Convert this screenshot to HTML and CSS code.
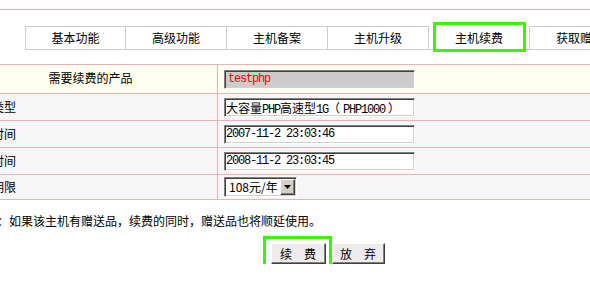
FILE: index.html
```html
<!DOCTYPE html>
<html lang="zh-CN">
<head>
<meta charset="utf-8">
<title>主机续费</title>
<link rel="stylesheet" href="styles.css">
</head>
<body>
<div class="page">
  <div class="rule"></div>
  <ul class="tabs">
    <li class="tab">基本功能</li>
    <li class="tab">高级功能</li>
    <li class="tab">主机备案</li>
    <li class="tab">主机升级</li>
    <li class="tab tab-active">主机续费</li>
    <li class="tab">获取赠品</li>
  </ul>
  <div class="form">
    <div class="row row-first">
      <div class="label label-center">需要续费的产品</div>
      <div class="value"><input class="field field-ro mono" value="testphp" readonly></div>
    </div>
    <div class="row">
      <div class="label">主机类型</div>
      <div class="value"><div class="field">大容量<span class="mono">PHP</span>高速型<span class="mono">1G</span>（<span class="mono paren-inner">PHP1000</span>）</div></div>
    </div>
    <div class="row">
      <div class="label">开通时间</div>
      <div class="value"><input class="field mono" value="2007-11-2 23:03:46" readonly></div>
    </div>
    <div class="row">
      <div class="label">到期时间</div>
      <div class="value"><input class="field mono" value="2008-11-2 23:03:45" readonly></div>
    </div>
    <div class="row row-last">
      <div class="label">续费期限</div>
      <div class="value">
        <div class="select"><span class="select-text">108元/年</span><span class="select-btn"><svg width="7" height="4" viewBox="0 0 7 4"><path d="M0 0H7L3.5 4Z" fill="#000"/></svg></span></div>
      </div>
    </div>
  </div>
  <p class="note">注意：如果该主机有赠送品，续费的同时，赠送品也将顺延使用。</p>
  <div class="actions">
    <button class="btn btn-primary">续　费</button>
    <button class="btn btn-cancel">放　弃</button>
  </div>
</div>
</body>
</html>
```
FILE: styles.css
```css
html, body {
  margin: 0;
  padding: 0;
  background: #fff;
  overflow: hidden;
}
body {
  font: 12px/16px "Noto Sans CJK SC", sans-serif;
  color: #000;
}
.page {
  margin-left: -36px;
  width: 727px;
  padding-top: 9px;
}
.rule {
  border-top: 1px solid #e8b2b6;
}
.tabs {
  display: flex;
  list-style: none;
  margin: 16px 0 0 61px;
  padding: 0;
}
.tab {
  flex: none;
  position: relative;
  width: 100px;
  height: 22px;
  line-height: 22px;
  text-align: center;
  border: 1px solid #cccccc;
  border-left: none;
}
.tab:first-child {
  width: 99px;
  border-left: 1px solid #cccccc;
}
.tab-active {
  border-top-color: transparent;
}
.tab-active::after {
  content: "";
  position: absolute;
  left: 4px;
  right: 3px;
  top: -5px;
  bottom: -3px;
  border: 3px solid #38f500;
  pointer-events: none;
}
.form {
  margin-top: 14px;
  border-top: 1px solid #e8b2b6;
}
.row {
  display: flex;
  height: 26px;
  background: #f6f6f6;
  border-bottom: 1px solid #e8b2b6;
}
.row-first {
  height: 28px;
  background: #fffff0;
}
.row-last {
  height: 24px;
}
.label {
  box-sizing: border-box;
  width: 254px;
  flex: none;
  display: flex;
  align-items: center;
  padding-left: 4px;
  border-right: 1px solid #e8b2b6;
}
.label-center {
  justify-content: center;
  padding-left: 0;
  padding-bottom: 3px;
}
.value {
  flex: 1;
  display: flex;
  align-items: center;
  padding-left: 6px;
}
.field {
  box-sizing: border-box;
  width: 191px;
  height: 19px;
  margin: 0;
  padding: 0 1px;
  border: 1px solid;
  border-color: #808080 #ffffff #ffffff #808080;
  box-shadow: inset 1px 1px #404040, inset -1px -1px #d4d0c8;
  background: #fff;
  color: #000;
  font: 12px/17px "Noto Sans CJK SC", sans-serif;
  outline: none;
  white-space: nowrap;
}
.mono {
  font-family: "Liberation Mono", "Noto Sans CJK SC", monospace;
  letter-spacing: -1.2px;
}
.paren-inner {
  padding: 0 3px;
}
.field-ro {
  background: #cccccc;
  color: #ff0000;
  padding-left: 3px;
}
.select {
  box-sizing: border-box;
  width: 73px;
  height: 20px;
  display: flex;
  align-items: center;
  justify-content: space-between;
  padding-left: 4px;
  border: 1px solid;
  border-color: #808080 #ffffff #ffffff #808080;
  box-shadow: inset 1px 1px #404040, inset -1px -1px #d4d0c8;
  background: #fff;
}
.select-btn {
  box-sizing: border-box;
  width: 15px;
  height: 16px;
  margin-right: 1px;
  display: flex;
  align-items: center;
  justify-content: center;
  background: #d4d0c8;
  border: 1px solid;
  border-color: #ffffff #404040 #404040 #ffffff;
  box-shadow: inset -1px -1px #808080;
}
.note {
  margin: 13px 0 0;
  padding-left: 9px;
  line-height: 16px;
}
.actions {
  display: flex;
  justify-content: center;
  gap: 6px;
  margin-top: 14px;
}
.btn {
  position: relative;
  box-sizing: border-box;
  height: 21px;
  margin: 0;
  padding: 0;
  font: 12px/17px "Noto Sans CJK SC", sans-serif;
  color: #000;
  background: #efebed;
  border: 1px solid;
  border-color: #ffffff #404040 #404040 #ffffff;
  box-shadow: inset -1px -1px #808080;
}
.btn-primary {
  width: 55px;
}
.btn-cancel {
  width: 53px;
}
.btn-primary::after {
  content: "";
  position: absolute;
  left: -9px;
  right: -7px;
  top: -8px;
  bottom: -9px;
  border: 3px solid #38f500;
  pointer-events: none;
}
```
